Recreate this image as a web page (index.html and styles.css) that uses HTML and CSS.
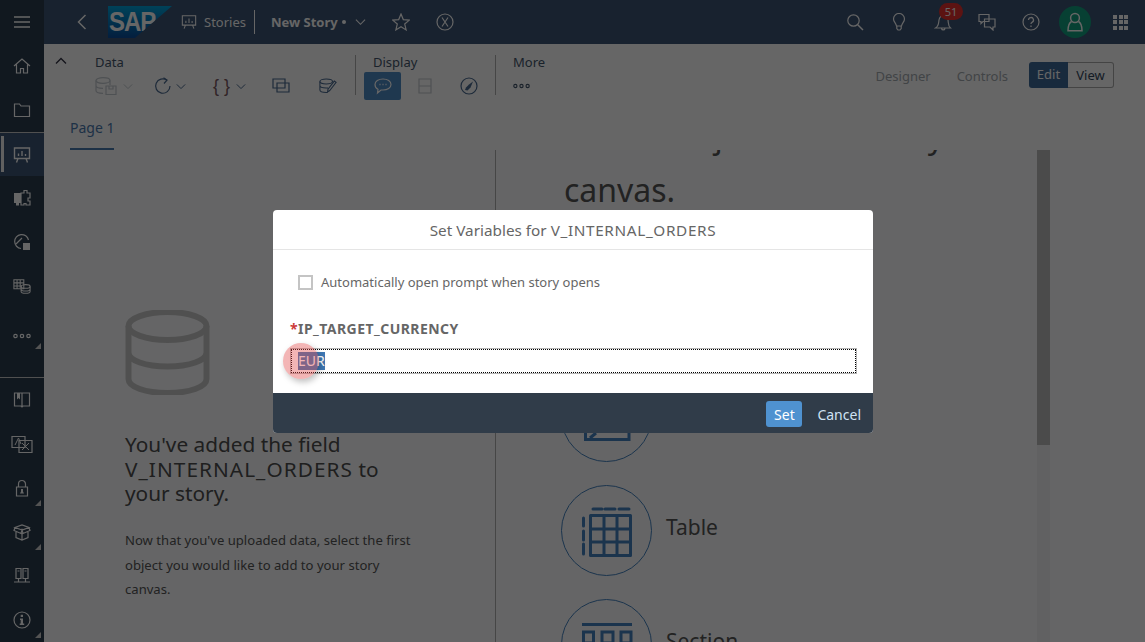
FILE: index.html
```html
<!DOCTYPE html>
<html lang="en">
<head>
  <meta charset="UTF-8" />
  <title>New Story</title>
  <link rel="stylesheet" href="styles.css">
</head>
<body>

<div class="app">
  <!-- left nav -->
  <nav class="sidenav">
    <div class="navItem"><svg class="ico" viewBox="0 0 18 18"><path d="M1 4h16M1 9h16M1 14h16" stroke-width="1.6"/></svg></div>
    <div class="navItem"><svg class="ico" viewBox="0 0 18 18"><path d="M1 9l8-7 8 7M3.500 7.500V16h4v-4.500h3V16h4V7.500"/></svg></div>
    <div class="navItem"><svg class="ico" viewBox="0 0 18 18"><path d="M1.500 3h5l1.500 2h8.500v10.500h-15z"/></svg></div>
    <div class="navItem active"><svg class="ico" viewBox="0 0 18 18"><path d="M1.500 2h15v10.500h-15zM5 12.500l-1.500 4M13 12.500l1.500 4M5.500 10V7.500M9 10V5M12.500 10V8" stroke-width="1.400"/></svg></div>
    <div class="navItem"><svg class="ico" viewBox="0 0 18 18"><path d="M8 4h3V1.500h3V4h3v5h-2v3h2v4h-4v-1.500h-2V16H8z"/><path class="solid" d="M1 4h7v10H6v2.500H3V14H1z"/></svg></div>
    <div class="navItem"><svg class="ico" viewBox="0 0 18 18"><path d="M8 15.500A7 7 0 1 1 15.500 7M3 11l6-6"/><path class="solid" d="M10 10h7v7h-7z"/></svg></div>
    <div class="navItem"><svg class="ico" viewBox="0 0 20 18"><path d="M1 2h11v10H1zM1 5.500h11M1 9h9M4.500 2v10M8 2v9"/><ellipse cx="14" cy="9.500" rx="5" ry="2"/><path d="M9 9.500v5.500c0 1 2 2 5 2s5-1 5-2V9.500M9 12.500c0 1 2 2 5 2s5-1 5-2"/></svg></div>
    <div class="navItem more dotsItem">
      <svg class="ico" viewBox="0 0 18 6"><circle cx="2.500" cy="3" r="1.700"/><circle cx="9" cy="3" r="1.700"/><circle cx="15.500" cy="3" r="1.700"/></svg>
    </div>
    <div class="navGap"></div>
    <div class="navItem"><svg class="ico" viewBox="0 0 18 18"><path d="M1.500 2h15v13H10l-1 1-1-1H1.500zM9 2v14"/><path class="solid" d="M4 2h3v6.500L5.500 7 4 8.500z"/></svg></div>
    <div class="navItem"><svg class="ico wide" viewBox="0 0 22 18"><path d="M1 1.500h13v11H1zM8 5.500h13v12H8z"/><path d="M4 10l3.500-7L10 9M11 8l7 7M18 8l-7 7" stroke-width="1"/></svg></div>
    <div class="navItem more"><svg class="ico" viewBox="0 0 18 18"><path d="M5.500 8V5a3.500 3.500 0 0 1 7 0v3M3.500 8h11v9h-11z"/><path class="solid" d="M8 10h2v2.500l1 2H7l1-2z"/></svg></div>
    <div class="navItem more"><svg class="ico" viewBox="0 0 18 18"><path d="M9 7L2 4.500 9 2l7 2.500zM2 4.500L1 7.500l7 3L9 7l1 3.500 7-3-1-3M3 9v5.500L9 17l6-2.500V9M9 10v7"/></svg></div>
    <div class="navItem"><svg class="ico" viewBox="0 0 18 18"><path d="M3 1.500h5v10H3zM10 1.500h5v10h-5zM5.500 11.500V15M12.500 11.500V15M1 15h16M4.500 4h2M11.500 4h2"/></svg></div>
    <div class="navItem more"><svg class="ico" viewBox="0 0 18 18"><circle cx="9" cy="9" r="8"/><path class="solid" d="M7.700 3.800h2.300v2.200H7.700zM7 7.500h3v5h1.200v1.500H6.700v-1.500h1V9H7z"/></svg></div>
  </nav>

  <div class="main">
    <!-- shell bar -->
    <header class="shell">
      <svg class="ico back" viewBox="0 0 10 16"><path d="M8.500 1L1.500 8l7 7" stroke-width="1.500"/></svg>
      <div class="logo"><span>SAP</span></div>
      <svg class="ico stories" viewBox="0 0 18 18"><path d="M1.500 2h15v10.500h-15zM5 12.500l-1.500 4M13 12.500l1.500 4M5.500 10V7.500M9 10V5M12.500 10V8"/></svg>
      <span class="crumb">Stories</span>
      <span class="crumbSep"></span>
      <span class="storyName">New Story</span>
      <span class="dirty"></span>
      <svg class="ico chev" viewBox="0 0 12 8"><path d="M1 1.500l5 5 5-5"/></svg>
      <svg class="ico star" viewBox="0 0 18 18"><path d="M9 1l2.300 5.600 6 .5-4.600 3.900 1.400 5.900L9 13.800l-5.100 3.100 1.400-5.900L.7 7.100l6-.5z"/></svg>
      <svg class="ico close" viewBox="0 0 18 18"><circle cx="9" cy="9" r="8"/><path d="M6 4.500l6 9M12 4.500l-6 9"/></svg>
      <div class="shellRight">
        <svg class="ico" viewBox="0 0 18 18"><circle cx="7.500" cy="7.500" r="5.700"/><path d="M11.700 11.700L17 17" stroke-width="1.500"/></svg>
        <svg class="ico" viewBox="0 0 18 18"><path d="M6.500 13C6 10 3.500 9 3.500 6a5.500 5.500 0 0 1 11 0c0 3-2.500 4-3 7zM6.800 13.500v2l1.200 1.500h2l1.200-1.500v-2"/></svg>
        <div class="bell">
          <svg class="ico" viewBox="0 0 18 18"><path d="M1.500 15h15c-2.500-2-2-5-2.500-8-.5-3-2-4.500-4-4.500S5.500 4 5 7c-.5 3 0 6-3.500 8zM7.500 15.500a1.800 1.800 0 0 0 3.500 0"/></svg>
          <span class="badge">51</span>
        </div>
        <svg class="ico" viewBox="0 0 18 18"><path d="M1 1.500h10v7H5L3 10.500V8.500H1z"/><path d="M6.500 6h10.500v8h-2v3l-3-3H6.500z"/></svg>
        <svg class="ico" viewBox="0 0 18 18"><circle cx="9" cy="9" r="8"/><path d="M6.500 7a2.500 2.500 0 1 1 3.500 2.300c-.7.400-1 .8-1 1.700M9 12.500v1.500" stroke-width="1.300"/></svg>
        <div class="avatar"><svg class="ico" viewBox="0 0 16 20"><circle cx="8" cy="6" r="4.400"/><path d="M4.500 9.500C2 11 1 13 1 18.800h14c0-5.800-1-7.800-3.500-9.300"/></svg></div>
        <div class="waffle"><i></i><i></i><i></i><i></i><i></i><i></i><i></i><i></i><i></i></div>
      </div>
    </header>

    <!-- toolbar -->
    <section class="toolbar">
      <svg class="ico collapse" viewBox="0 0 12 8"><path d="M1 6.500l5-5 5 5" stroke-width="1.300"/></svg>
      <div class="group dataGroup">
        <div class="groupTitle">Data</div>
        <div class="tools">
          <span class="tool faint">
            <svg class="ico db" viewBox="0 0 22 18"><ellipse cx="8" cy="3.500" rx="7" ry="2.800"/><path d="M1 3.500v10c0 1.500 3 2.800 7 2.800M1 8.500c0 1.500 3 2.800 7 2.800M15 3.500V8M11 9h10v8.500H11zM14 9v3h4V9"/></svg>
            <svg class="ico chevSm" viewBox="0 0 12 8"><path d="M1 1.500l5 5 5-5"/></svg>
          </span>
          <span class="tool refresh">
            <svg class="ico" viewBox="0 0 18 18"><path d="M13 3.200A7.200 7.200 0 1 0 16 9"/><path d="M9.500 .8L13 3.200 10 6.500"/></svg>
            <svg class="ico chevSm" viewBox="0 0 12 8"><path d="M1 1.500l5 5 5-5"/></svg>
          </span>
          <span class="tool braces">
            <span class="braceText">{ }</span>
            <svg class="ico chevSm" viewBox="0 0 12 8"><path d="M1 1.500l5 5 5-5"/></svg>
          </span>
          <span class="tool copy"><svg class="ico" viewBox="0 0 18 16"><path d="M1 1h12v9H1zM5 5h12v9H5z"/></svg></span>
          <span class="tool dbEdit"><svg class="ico" viewBox="0 0 20 18"><ellipse cx="8" cy="4" rx="7" ry="2.800"/><path d="M1 4v9.500c0 1.500 3 2.800 7 2.800h2M1 8.500c0 1.500 3 2.800 7 2.800h2M12 14l7-9-2-1.500-7 9-.5 3z"/></svg></span>
        </div>
      </div>
      <div class="group displayGroup">
        <div class="groupTitle">Display</div>
        <div class="tools">
          <span class="tool on"><svg class="ico" viewBox="0 0 18 16"><path d="M9 1c4.500 0 8 2.300 8 5.500S13.500 12 9 12H7l-3.500 3 .5-3.700C2 10.500 1 8.500 1 6.500 1 3.300 4.500 1 9 1z"/><path d="M5.500 6.500h1M8.500 6.500h1M11.500 6.500h1" stroke-width="1.500"/></svg></span>
          <span class="tool faint panel"><svg class="ico" viewBox="0 0 14 16"><path d="M1 1h12v14H1zM1 8h12"/></svg></span>
          <span class="tool compass"><svg class="ico" viewBox="0 0 18 18"><circle cx="9" cy="9" r="8"/><path class="solid" d="M13 4.500L10.500 10.500 7.500 13.500 5 13l1-2.500 3-3z"/></svg></span>
        </div>
      </div>
      <div class="group moreGroup">
        <div class="groupTitle">More</div>
        <div class="tools">
          <svg class="ico moreDots" viewBox="0 0 18 6"><circle cx="2.500" cy="3" r="1.700"/><circle cx="9" cy="3" r="1.700"/><circle cx="15.500" cy="3" r="1.700"/></svg>
        </div>
      </div>
      <div class="toolbarRight">
        <span class="tabLink">Designer</span>
        <span class="tabLink">Controls</span>
        <div class="segment"><span class="segOn">Edit</span><span class="segOff">View</span></div>
      </div>
    </section>

    <div class="pageTabs"><span class="pageTab">Page 1</span></div>

    <!-- story canvas -->
    <div class="canvas">
      <div class="leftPane">
        <svg class="bigDb" viewBox="0 0 85 85" fill="none">
          <ellipse cx="42.500" cy="16" rx="39" ry="14"/>
          <path d="M3.500 16v53c0 8 17 14 39 14s39-6 39-14V16M3.500 42.500c0 8 17 14 39 14s39-6 39-14"/>
        </svg>
        <h2 class="leftTitle">You've added the field <span class="capsWide">V_INTERNAL_ORDERS</span> to your story.</h2>
        <p class="leftText">Now that you've uploaded data, select the first object you would like to add to your story canvas.</p>
      </div>
      <div class="rightPane">
        <h1 class="rightTitle"><span class="titleTop">Add an object to the story</span> canvas.</h1>
        <div class="objectRow">
          <div class="objectCircle"><svg viewBox="0 0 50 50"><path d="M3.500 34v14.500h43.500V34M8 47l6-5"/></svg></div>
          <span class="objectName">Chart</span>
        </div>
        <div class="objectRow">
          <div class="objectCircle">
            <svg viewBox="0 0 50 50">
              <path d="M8.500 10.500h40v40h-40zM8.500 24h40M8.500 37h40M22 10.500v40M35 10.500v40" stroke-linejoin="round"/>
              <path d="M11 4h9M23 4h10M37 4h10M1.500 13v8M1.500 26v9M1.500 39v10" stroke-linecap="round"/>
            </svg>
          </div>
          <span class="objectName">Table</span>
        </div>
        <div class="objectRow">
          <div class="objectCircle">
            <svg viewBox="0 0 50 50"><path d="M0 5.500h50"/><path d="M1.500 13h10v11h-10zM20 13h11v11H20zM39 13h10v11H39z"/></svg>
          </div>
          <span class="objectName">Section</span>
        </div>
      </div>
      <div class="scrollTrack"><div class="scrollThumb"></div></div>
    </div>
  </div>
</div>

<!-- dialog block layer -->
<div class="blocker"></div>

<div class="dialog">
  <div class="dialogTitle">Set Variables for <span class="capsTitle">V_INTERNAL_ORDERS</span></div>
  <div class="dialogBody">
    <label class="autoOpen"><span class="checkbox"></span>Automatically open prompt when story opens</label>
    <div class="varLabel"><span class="req">*</span>IP_TARGET_CURRENCY</div>
    <div class="varInput"><div class="focusRing"><span class="selected">EUR</span></div></div>
  </div>
  <div class="dialogFooter">
    <button class="btnSet">Set</button>
    <button class="btnCancel">Cancel</button>
  </div>
</div>

<div class="clickMark"></div>

</body>
</html>
```
FILE: styles.css
```css
* { box-sizing: border-box; }

html, body {
  margin: 0;
  height: 100%;
  overflow: hidden;
}

body {
  font-family: "Noto Sans", "Open Sans", sans-serif;
  color: #555;
  background: #fcfdff;
}

.ico {
  display: block;
  width: 18px;
  height: 18px;
  fill: none;
  stroke: currentColor;
  stroke-width: 1.2;
  flex: none;
}

.ico .solid { fill: currentColor; stroke: none; }

.app {
  display: flex;
  height: 642px;
}

/* left nav */
.sidenav {
  width: 44px;
  flex: none;
  background: #2b3c4e;
  color: #fff;
  display: flex;
  flex-direction: column;
}

.navItem {
  height: 44px;
  flex: none;
  display: flex;
  align-items: center;
  justify-content: center;
  position: relative;
}

.navItem .wide { width: 24px; }

.navItem.active {
  background: #3c5575;
  border-top: 1px solid #c8c8c8;
}

.navItem.active::before {
  content: "";
  position: absolute;
  left: 1px;
  top: 3px;
  bottom: 4px;
  width: 3px;
  background: #f0f0f0;
}

.navItem.dotsItem {
  height: 69px;
  padding-bottom: 13px;
}

.navItem.more::after {
  content: "";
  position: absolute;
  right: 3px;
  bottom: 4px;
  border-left: 6px solid transparent;
  border-bottom: 6px solid #d0d0d0;
}

.navItem.dotsItem::after { bottom: 28px; }

.navGap {
  height: 0;
  border-top: 1px solid #c8c8c8;
  flex: none;
}

.main {
  flex: 1;
  min-width: 0;
  display: flex;
  flex-direction: column;
}

/* shell bar */
.shell {
  height: 44px;
  flex: none;
  background: #3c5575;
  color: #fff;
  display: flex;
  align-items: center;
  padding-left: 33px;
}

.back { width: 10px; height: 16px; margin-right: 21px; }

.logo {
  width: 64px;
  height: 32px;
  padding-left: 1px;
  background: linear-gradient(to bottom, #00a5de, #0a4d9c);
  clip-path: polygon(0 0, 100% 0, 42% 100%, 0 100%);
  font-family: "Liberation Sans", sans-serif;
  font-weight: bold;
  font-size: 24px;
  line-height: 32px;
  letter-spacing: -1px;
  color: #fff;
}

.logo span {
  display: inline-block;
  transform: scaleY(1.15);
}

.stories { width: 16px; height: 16px; margin-left: 9px; }

.crumb {
  font-size: 13px;
  margin-left: 7px;
}

.crumbSep {
  width: 1px;
  height: 24px;
  background: #fff;
  margin: 0 16px 0 8px;
}

.storyName {
  font-size: 13px;
  font-weight: bold;
}

.dirty {
  width: 4px;
  height: 4px;
  border-radius: 50%;
  background: #fff;
  margin-left: 4px;
}

.chev { width: 11px; height: 8px; margin-left: 9px; }

.star { width: 18px; height: 18px; margin-left: 26px; }

.close { width: 18px; height: 18px; margin-left: 26px; }

.shellRight {
  margin-left: auto;
  display: flex;
  align-items: center;
  gap: 26px;
  padding-right: 17px;
}

.bell { position: relative; }

.badge {
  position: absolute;
  left: 5px;
  top: -10px;
  width: 24px;
  height: 17px;
  border-radius: 9px;
  background: #e5302e;
  color: #fff;
  font-size: 11px;
  line-height: 17px;
  text-align: center;
}

.avatar {
  width: 32px;
  height: 32px;
  margin: 0 -4px 0 -7px;
  border-radius: 50%;
  background: #13a17f;
  color: #fff;
  display: flex;
  align-items: center;
  justify-content: center;
}

.avatar .ico {
  width: 16px;
  height: 20px;
  stroke-width: 1.500;
}

.waffle {
  width: 15px;
  display: grid;
  grid-template-columns: repeat(3, 4px);
  gap: 1.500px;
}

.waffle i {
  height: 4px;
  background: #fff;
}

/* toolbar */
.toolbar {
  height: 56px;
  flex: none;
  display: flex;
  position: relative;
  padding-top: 11px;
  color: #4a6f96;
  background: #fff;
}

.collapse {
  width: 12px;
  height: 8px;
  margin: 2px 0 0 11px;
  color: #334;
}

.group { color: #44566b; }

.groupTitle {
  font-size: 13px;
  line-height: 15px;
}

.dataGroup { margin-left: 28px; width: 261px; border-right: 1px solid #b0b0b0; height: 40px; }
.displayGroup { width: 140px; border-right: 1px solid #b0b0b0; height: 40px; padding-left: 17px; }
.moreGroup { padding-left: 17px; }

.tools {
  display: flex;
  align-items: center;
  height: 28px;
  margin-top: 2px;
}

.tool {
  display: flex;
  align-items: center;
  color: #4a6a90;
}

.tool.faint { color: #c4cad0; }
.chevSm { width: 10px; height: 7px; margin-left: 6px; }
.db { width: 22px; }
.refresh { margin-left: 21px; }
.refresh .chevSm { margin-left: 4px; }
.braces { margin-left: 27px; }
.braceText {
  font-family: "Liberation Sans", sans-serif;
  font-size: 18px;
  line-height: 20px;
  color: #7a5a62;
}
.braces .chevSm { margin-left: 6px; }
.copy { margin-left: 26px; }
.dbEdit { margin-left: 29px; }
.on {
  width: 37px;
  height: 28px;
  margin-left: -9px;
  border-radius: 2px;
  background: #4f8cc6;
  color: #fff;
  justify-content: center;
}
.panel { margin-left: 17px; }
.panel .ico { width: 14px; height: 16px; }
.compass { margin-left: 28px; }
.moreDots { width: 17px; height: 6px; color: #44566b; }

.toolbarRight {
  position: absolute;
  right: 31px;
  top: 18px;
  display: flex;
  align-items: center;
}

.tabLink {
  font-size: 13px;
  padding-top: 2px;
  color: #a4aab0;
  margin-right: 26px;
}

.tabLink:nth-child(2) { margin-right: 21px; }

.segment {
  display: flex;
  height: 26px;
  font-size: 13px;
  line-height: 24px;
}

.segOn {
  width: 39px;
  background: #3e6a9a;
  color: #fff;
  text-align: center;
  border-radius: 3px 0 0 3px;
}

.segOff {
  width: 46px;
  color: #33475c;
  text-align: center;
  border: 1px solid #aaa;
  border-left: none;
  border-radius: 0 3px 3px 0;
}

/* page tabs */
.pageTabs {
  height: 50px;
  flex: none;
  padding-left: 26px;
  display: flex;
  align-items: flex-end;
  background: #fff;
}

.pageTab {
  width: 44px;
  height: 38px;
  padding-top: 7px;
  font-size: 14px;
  line-height: 18px;
  white-space: nowrap;
  color: #4a7ab0;
  border-bottom: 2px solid #4a7ab0;
}

/* canvas */
.canvas {
  flex: 1;
  min-height: 0;
  display: flex;
  overflow: hidden;
  background: #fcfdff;
}

.leftPane {
  width: 452px;
  flex: none;
  padding: 160px 70px 0 81px;
  border-right: 1px solid #b0b0b0;
}

.bigDb {
  display: block;
  width: 85px;
  height: 85px;
  stroke: #c9c9c9;
  stroke-width: 6;
}

.leftTitle {
  margin: 37px 0 0;
  width: 270px;
  font-size: 20.800px;
  font-weight: normal;
  line-height: 24.700px;
  color: #4e4e4e;
}

.capsWide { letter-spacing: 1.050px; }

.leftText {
  margin: 22px 0 0;
  font-size: 13.100px;
  line-height: 24.500px;
  color: #555;
}

.rightPane {
  flex: 1;
  min-width: 0;
  padding-left: 65px;
}

.rightTitle {
  margin: -41px 0 0 3px;
  font-size: 32px;
  font-weight: normal;
  line-height: 54px;
  width: 420px;
  color: #555;
}

.titleTop { letter-spacing: -0.3px; }

.objectRow {
  display: flex;
  align-items: center;
  height: 114px;
}

.objectRow:first-of-type { margin-top: 142px; }

.objectCircle {
  width: 91px;
  height: 91px;
  flex: none;
  border-radius: 50%;
  border: 1px solid #4482c0;
  display: flex;
  align-items: center;
  justify-content: center;
}

.objectCircle svg {
  width: 50px;
  height: 50px;
  overflow: visible;
  fill: none;
  stroke: #4482c0;
  stroke-width: 3;
}

.objectName {
  margin: 0 0 6px 14px;
  font-size: 21px;
  color: #555;
}

.scrollTrack {
  width: 13px;
  flex: none;
  margin-right: 95px;
  background: #f2f3f4;
}

.scrollThumb {
  height: 295px;
  background: #bbb;
}

/* dialog */
.blocker {
  position: absolute;
  inset: 0;
  background: rgba(0, 0, 0, 0.6);
}

.dialog {
  position: absolute;
  left: 273px;
  top: 210px;
  width: 600px;
  height: 223px;
  background: #fff;
  border-radius: 4px;
  overflow: hidden;
  display: flex;
  flex-direction: column;
}

.dialogTitle {
  height: 40px;
  flex: none;
  border-bottom: 1px solid #e5e5e5;
  font-size: 15.300px;
  line-height: 41px;
  text-align: center;
  color: #666;
}

.capsTitle { letter-spacing: 0.650px; }

.dialogBody {
  flex: 1;
  padding: 24px 17px 0;
  color: #666;
}

.autoOpen {
  display: flex;
  align-items: center;
  padding-left: 8px;
  font-size: 13px;
  line-height: 16px;
}

.checkbox {
  width: 15px;
  height: 15px;
  margin-right: 8px;
  border: 2px solid #c4c4c4;
}

.varLabel {
  margin-top: 30px;
  font-size: 14px;
  font-weight: bold;
  line-height: 18px;
  letter-spacing: 0.450px;
}

.req { color: #cc3b3b; }

.varInput {
  width: 567px;
  height: 26px;
  margin-top: 10px;
  border: 1px solid #b4b4b4;
}

.focusRing {
  height: 24px;
  padding: 2px 6px;
  border: 1px dotted #000;
  font-size: 14px;
  line-height: 18px;
}

.selected {
  display: inline-block;
  background: #3f78b4;
  color: #fff;
}

.dialogFooter {
  height: 40px;
  flex: none;
  background: #303c49;
  display: flex;
  align-items: center;
  justify-content: flex-end;
  padding: 2px 12px 0 0;
}

.dialogFooter button {
  font: inherit;
  font-size: 14px;
  border: none;
  padding: 0;
}

.btnSet {
  width: 36px;
  height: 26px;
  border-radius: 3px;
  background: #4f92d0;
  color: #fff;
  margin-right: 15px;
}

.btnCancel {
  background: none;
  color: #cfe2f3;
}

.clickMark {
  position: absolute;
  left: 283px;
  top: 343px;
  width: 36px;
  height: 36px;
  border-radius: 50%;
  background: rgba(225, 70, 70, 0.4);
  box-shadow: 2px 3px 6px rgba(0, 0, 0, 0.25);
}
```
